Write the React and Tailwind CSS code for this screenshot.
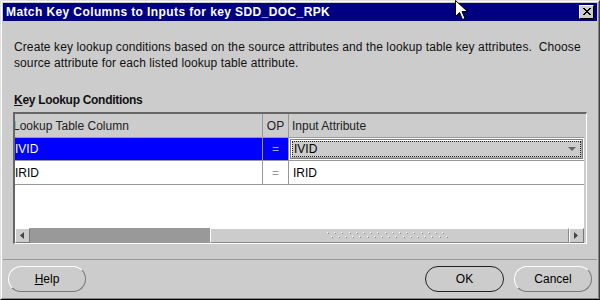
import React from "react";

function Cursor() {
  return (
    <svg className="absolute left-[455px] top-0" width="14" height="21" viewBox="0 0 14 21">
      <path d="M0.5 0.5 L0.5 16.5 L4.5 12.5 L7.5 19.5 L10 18.5 L7 11.5 L12.5 11.5 Z" fill="#fff" stroke="#000" strokeWidth="1" />
    </svg>
  );
}

function Grip() {
  const dots = [];
  for (let i = 0; i < 17; i++) {
    dots.push(<rect key={"a" + i} x={i * 7.2} y={0} width="1" height="1" fill="#fff" />);
    dots.push(<rect key={"b" + i} x={i * 7.2 + 1} y={1} width="1" height="1" fill="#888" />);
    dots.push(<rect key={"c" + i} x={i * 7.2 + 3.6} y={4} width="1" height="1" fill="#fff" />);
    dots.push(<rect key={"d" + i} x={i * 7.2 + 4.6} y={5} width="1" height="1" fill="#888" />);
  }
  return (
    <svg width="126" height="7" viewBox="0 0 126 7" shapeRendering="crispEdges">
      {dots}
    </svg>
  );
}

function ScrollButton({ dir }) {
  return (
    <div className="w-[15px] h-full bg-[#cccccc] border-t border-l border-white border-r border-b border-r-[#777] border-b-[#777] flex items-center justify-center">
      <svg width="5" height="7" viewBox="0 0 5 7">
        {dir === "left" ? (
          <path d="M4 0 L4 7 L0 3.5 Z" fill="#444" />
        ) : (
          <path d="M0 0 L0 7 L4 3.5 Z" fill="#444" />
        )}
      </svg>
    </div>
  );
}

export default function App() {
  return (
    <div className="w-[600px] h-[300px] overflow-hidden relative font-['Liberation_Sans',Arial,sans-serif] text-[12px] text-black">
      <div className="w-full h-full border border-t-[#e0e0e0] border-l-[#e0e0e0] border-r-[#404040] border-b-black">
        <div className="w-full h-full border border-t-white border-l-white border-r-[#888] border-b-[#888] bg-[#cccccc] p-[1px] flex flex-col">
          {/* title bar */}
          <div className="h-[18px] bg-[#000080] flex items-center pl-[3px] pr-[3px] shrink-0">
            <span className="text-white font-bold text-[12px] tracking-[0.4px] leading-none">
              Match Key Columns to Inputs for key SDD_DOC_RPK
            </span>
            <div className="ml-auto w-[15px] h-[14px] bg-[#cccccc] border border-t-white border-l-white border-r-black border-b-black flex items-center justify-center">
              <svg width="9" height="8" viewBox="0 0 9 8" shapeRendering="crispEdges">
                <path d="M1 0 L8 7 M8 0 L1 7 M2 0 L9 7 M9 0 L2 7" stroke="#000" strokeWidth="1" />
              </svg>
            </div>
          </div>

          {/* content */}
          <div className="px-[11px] flex flex-col shrink-0">
            <p className="pt-[18px] leading-[16px] text-[#111] tracking-[0.1px] whitespace-nowrap">
              Create key lookup conditions based on the source attributes and the lookup table key attributes.&nbsp; Choose
              <br />
              source attribute for each listed lookup table attribute.
            </p>
            <div className="mt-[21px] leading-[16px] font-bold text-[#111] tracking-[-0.3px]">
              <span className="underline">K</span>ey Lookup Conditions
            </div>

            {/* table frame */}
            <div className="mt-[4px] -ml-[1px] w-[574px] h-[132px] border-t-2 border-l-2 border-[#666] border-r border-b border-r-white border-b-white bg-[#cccccc] pr-[2px] flex flex-col">
              {/* header */}
              <div className="h-[24px] flex border-b border-[#999] bg-[#cccccc] text-[#222] shrink-0">
                <div className="w-[248px] border-r border-[#999] overflow-hidden flex items-center">
                  <span className="-ml-[2px] whitespace-nowrap">Lookup Table Column</span>
                </div>
                <div className="w-[26px] border-r border-[#999] flex items-center justify-center">OP</div>
                <div className="flex-1 flex items-center pl-[3px]">Input Attribute</div>
              </div>
              {/* row 1 */}
              <div className="h-[23px] flex border-b border-[#999] bg-white shrink-0">
                <div className="w-[248px] border-r border-[#999] bg-[#0000ff] text-white flex items-center">IVID</div>
                <div className="w-[26px] border-r border-[#999] bg-[#0000ff] text-[#aaaaaa] flex items-center justify-center">=</div>
                <div className="flex-1 bg-white py-[1px] pl-[1px] pr-[1px]">
                  <div className="h-full border border-[#808080] bg-[#cccccc]">
                    <div className="h-full border border-t-white border-l-white border-r-[#aaa] border-b-[#aaa]">
                      <div className="h-full border border-dotted border-[#222] flex items-center pl-[1px] pr-[4px]">
                        <span>IVID</span>
                        <svg className="ml-auto" width="8" height="4" viewBox="0 0 8 4">
                          <path d="M0 0 L8 0 L4 4 Z" fill="#666" />
                        </svg>
                      </div>
                    </div>
                  </div>
                </div>
              </div>
              {/* row 2 */}
              <div className="h-[24px] flex border-b border-[#999] bg-white shrink-0">
                <div className="w-[248px] border-r border-[#999] flex items-center">IRID</div>
                <div className="w-[26px] border-r border-[#999] text-[#999] flex items-center justify-center">=</div>
                <div className="flex-1 flex items-center pl-[4px]">IRID</div>
              </div>
              {/* empty */}
              <div className="flex-1 bg-white" />
              {/* scrollbar */}
              <div className="h-[15px] flex shrink-0">
                <ScrollButton dir="left" />
                <div className="w-[180px] bg-[#999999]" />
                <div className="flex-1 bg-[#cccccc] border-t border-l border-white border-r border-b border-r-[#888] border-b-[#888] flex items-center justify-center">
                  <Grip />
                </div>
                <ScrollButton dir="right" />
              </div>
            </div>
          </div>

          {/* separator */}
          <div className="mt-[15px] h-px bg-[#999] shrink-0" />

          {/* buttons */}
          <div className="mt-[6px] px-[5px] flex items-center shrink-0">
            <button className="w-[78px] h-[26px] rounded-full border border-t-white border-l-white border-r-[#777] border-b-[#777] bg-[#cccccc] text-[12px] text-black">
              <span className="underline">H</span>elp
            </button>
            <button className="ml-auto w-[79px] h-[26px] rounded-full border border-[#222] bg-[#cccccc] text-[12px] text-black">
              OK
            </button>
            <button className="ml-[10px] w-[78px] h-[26px] rounded-full border border-t-white border-l-white border-r-[#777] border-b-[#777] bg-[#cccccc] text-[12px] text-black">
              Cancel
            </button>
          </div>
        </div>
      </div>
      <Cursor />
    </div>
  );
}
